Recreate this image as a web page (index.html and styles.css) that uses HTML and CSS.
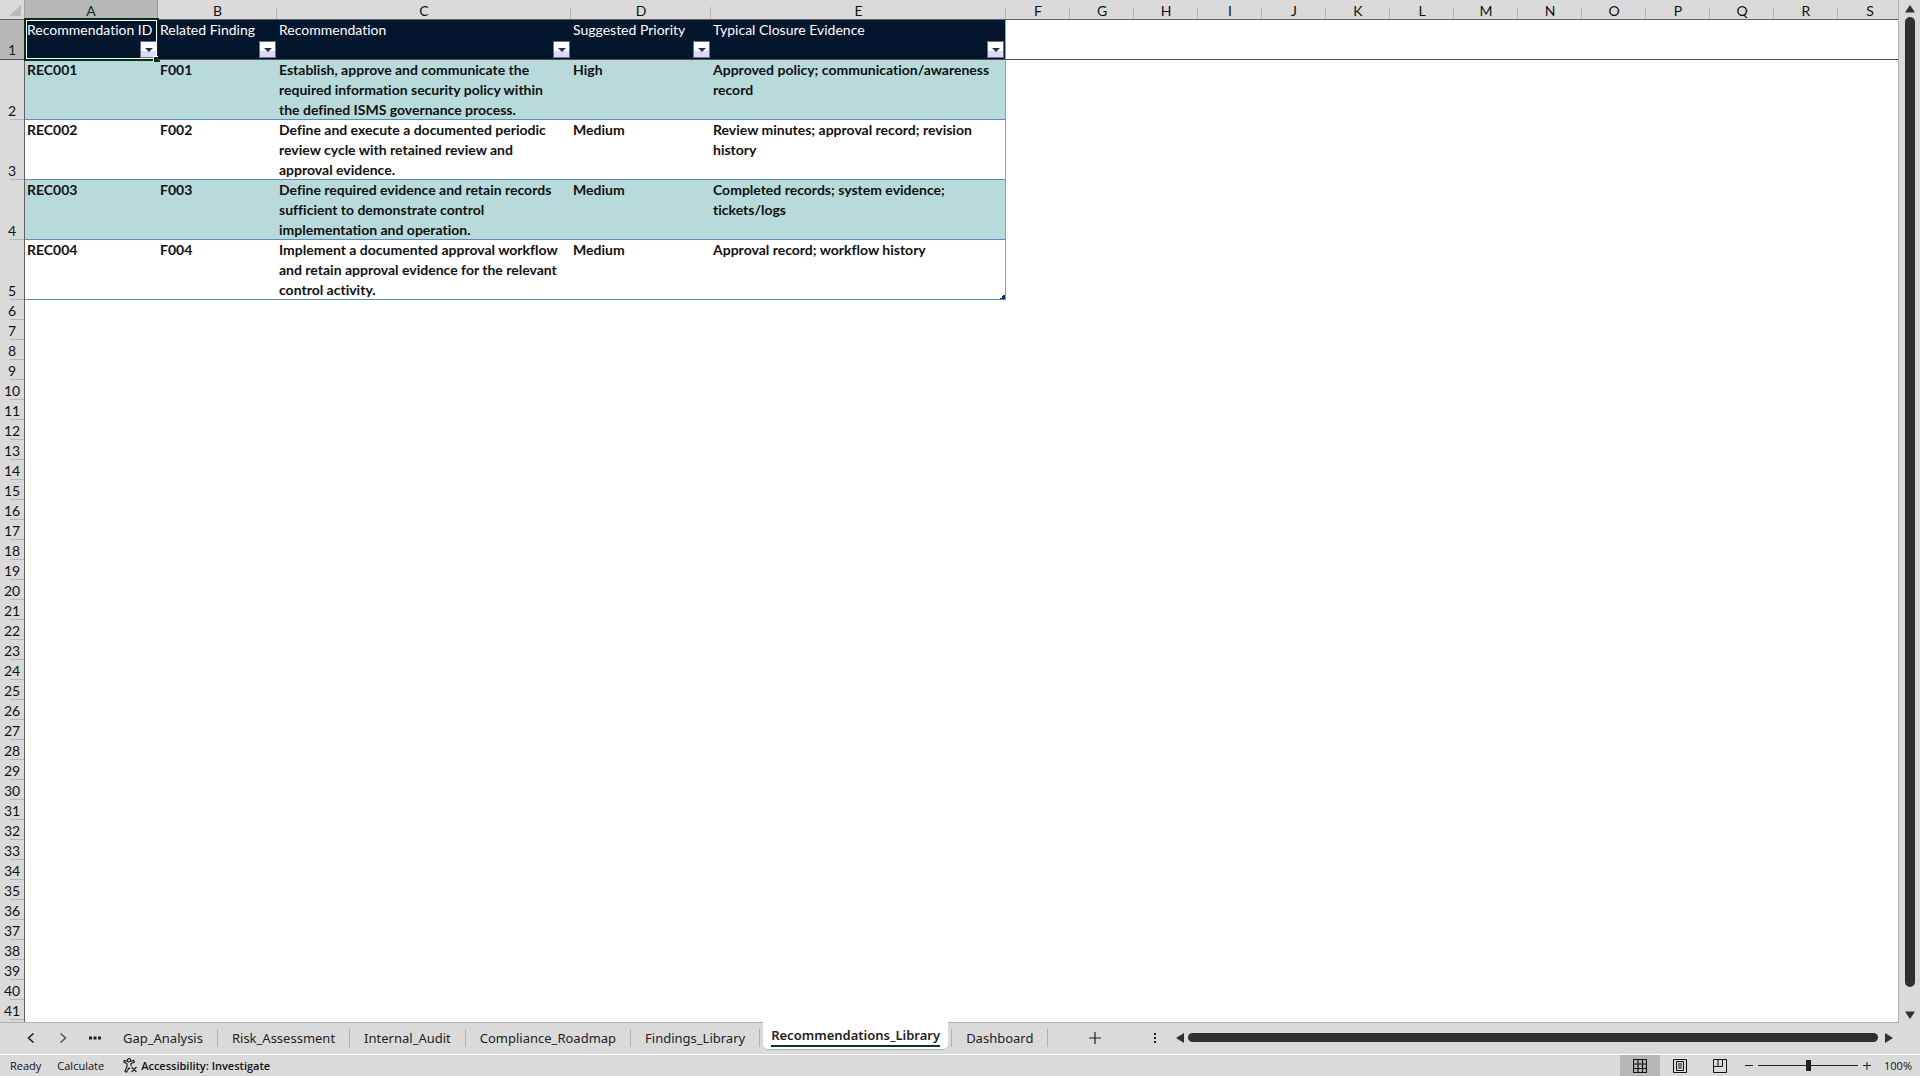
FILE: index.html
```html
<!DOCTYPE html>
<html lang="en">
<head>
<meta charset="utf-8">
<title>Recommendations_Library</title>
<link rel="stylesheet" href="styles.css">
</head>
<body>
<main class="workspace">
  <div class="sheet">
    <table class="grid">
      <colgroup>
        <col class="w-rowhead"><col class="w-a"><col class="w-b"><col class="w-c"><col class="w-d"><col class="w-e">
        <col class="w-std" span="14">
      </colgroup>
      <thead>
        <tr class="letters">
          <td class="corner"><svg width="12" height="11" viewBox="0 0 12 11"><path d="M12 0v11H0z" fill="#b9b9b9"/></svg></td>
          <th class="on">A</th><th>B</th><th>C</th><th>D</th><th>E</th><th>F</th><th>G</th><th>H</th><th>I</th><th>J</th><th>K</th><th>L</th><th>M</th><th>N</th><th>O</th><th>P</th><th>Q</th><th>R</th><th>S</th>
        </tr>
      </thead>
      <tbody id="rows">
        <tr class="titles">
          <th class="num on">1</th>
          <td class="title selected"><div class="field"><span>Recommendation ID</span><button class="filter" aria-label="Filter Recommendation ID"></button></div></td>
          <td class="title"><div class="field"><span>Related Finding</span><button class="filter" aria-label="Filter Related Finding"></button></div></td>
          <td class="title"><div class="field"><span>Recommendation</span><button class="filter" aria-label="Filter Recommendation"></button></div></td>
          <td class="title"><div class="field"><span>Suggested Priority</span><button class="filter" aria-label="Filter Suggested Priority"></button></div></td>
          <td class="title edge"><div class="field"><span>Typical Closure Evidence</span><button class="filter" aria-label="Filter Typical Closure Evidence"></button></div></td>
          <td colspan="14" class="rest"></td>
        </tr>
        <tr class="record band">
          <th class="num">2</th>
          <td>REC001</td><td>F001</td>
          <td>Establish, approve and communicate the required information security policy within the defined ISMS governance process.</td>
          <td>High</td>
          <td class="edge">Approved policy; communication/awareness record</td>
        </tr>
        <tr class="record">
          <th class="num">3</th>
          <td>REC002</td><td>F002</td>
          <td>Define and execute a documented periodic review cycle with retained review and approval evidence.</td>
          <td>Medium</td>
          <td class="edge">Review minutes; approval record; revision history</td>
        </tr>
        <tr class="record band">
          <th class="num">4</th>
          <td>REC003</td><td>F003</td>
          <td>Define required evidence and retain records sufficient to demonstrate control implementation and operation.</td>
          <td>Medium</td>
          <td class="edge">Completed records; system evidence; tickets/logs</td>
        </tr>
        <tr class="record">
          <th class="num">5</th>
          <td>REC004</td><td>F004</td>
          <td>Implement a documented approval workflow and retain approval evidence for the relevant control activity.</td>
          <td>Medium</td>
          <td class="edge last">Approval record; workflow history</td>
        </tr>
      </tbody>
    </table>
  </div>
  <div class="vscroll">
    <svg width="10" height="8" viewBox="0 0 10 8"><path d="M5 0l5 7.500H0z" fill="#303030"/></svg>
    <div class="vthumb"></div>
    <svg width="10" height="8" viewBox="0 0 10 8"><path d="M0 .5h10L5 8z" fill="#303030"/></svg>
  </div>
</main>
<nav class="tabs">
  <div class="steps">
    <button aria-label="Previous sheet"><svg width="8" height="10" viewBox="0 0 8 10"><path d="M6.500 .5L1.500 5l5 4.500" fill="none" stroke="#222" stroke-width="1.600"/></svg></button>
    <button aria-label="Next sheet"><svg width="8" height="10" viewBox="0 0 8 10"><path d="M1.500 .5l5 4.500-5 4.500" fill="none" stroke="#555" stroke-width="1.500"/></svg></button>
    <button aria-label="More sheets"><svg width="12" height="4" viewBox="0 0 12 4"><path d="M0 .5h3v3H0zM4.500 .5h3v3h-3zM9 .5h3v3H9z" fill="#222"/></svg></button>
  </div>
  <a class="tab" href="#gap">Gap_Analysis</a>
  <a class="tab" href="#risk">Risk_Assessment</a>
  <a class="tab" href="#audit">Internal_Audit</a>
  <a class="tab" href="#roadmap">Compliance_Roadmap</a>
  <a class="tab" href="#findings">Findings_Library</a>
  <a class="tab active" href="#recommendations"><span>Recommendations_Library</span></a>
  <a class="tab after" href="#dashboard">Dashboard</a>
  <button class="add" aria-label="New sheet"><svg width="12" height="12" viewBox="0 0 12 12"><path d="M6 0v12M0 6h12" stroke="#222" stroke-width="1.200"/></svg></button>
  <div class="hscroll">
    <svg class="grip" width="2" height="12" viewBox="0 0 2 12"><path d="M0 1h2v2H0zM0 5h2v2H0zM0 9h2v2H0z" fill="#222"/></svg>
    <svg width="8" height="10" viewBox="0 0 8 10"><path d="M8 0v10L0 5z" fill="#303030"/></svg>
    <div class="hthumb"></div>
    <svg width="8" height="10" viewBox="0 0 8 10"><path d="M0 0v10l8-5z" fill="#303030"/></svg>
  </div>
</nav>
<footer class="status">
  <span>Ready</span>
  <span>Calculate</span>
  <button class="access"><svg width="15" height="15" viewBox="0 0 15 15" fill="none" stroke="#222" stroke-width="1.200" stroke-linejoin="round"><circle cx="6" cy="2.300" r="1.700"/><path d="M4.300 3.500L1.500 2.400.7 3.900 4 5.800V8.500L2 13.300l1.500.9L6 9.800l1 1.200M7.700 3.500l2.900-1.100.8 1.500L8 5.800V8M8.500 9l5 5M13.500 9l-5 5"/></svg>Accessibility: Investigate</button>
  <div class="views">
    <button class="view on" aria-label="Normal"><svg width="14" height="14" viewBox="0 0 14 14" fill="none" stroke="#111"><path d="M.5 .5h13v13H.5zM5 .5v13M9.500 .5v13M.5 5h13M.5 9.500h13" stroke-width="1.200"/></svg></button>
    <button class="view" aria-label="Page layout"><svg width="14" height="14" viewBox="0 0 14 14" fill="none" stroke="#111"><path d="M.5 .5h13v13H.5zM3.500 2.500h7v9h-7zM5 5h4M5 7h4M5 9h4"/></svg></button>
    <button class="view" aria-label="Page break preview"><svg width="14" height="14" viewBox="0 0 14 14" fill="none" stroke="#111"><path d="M.5 .5h13v13H.5zM5 .5v7M.5 7.500h9M9.500 .5v7"/></svg></button>
  </div>
  <button class="zoom-step" aria-label="Zoom out"><svg width="8" height="8" viewBox="0 0 8 8"><path d="M0 3.500h8" stroke="#222"/></svg></button>
  <input class="zoom" type="range" min="0" max="100" value="50" aria-label="Zoom">
  <button class="zoom-step" aria-label="Zoom in"><svg width="8" height="8" viewBox="0 0 8 8"><path d="M0 3.500h8M4 0v8" stroke="#222"/></svg></button>
  <span class="percent">100%</span>
</footer>
<script src="rows.js"></script>
</body>
</html>
```
FILE: styles.css
```css
* { box-sizing: border-box; }
body {
  margin: 0;
  height: 100vh;
  display: flex;
  flex-direction: column;
  overflow: hidden;
  background: #dadada;
  color: #111;
  font: 14px/20px Lato, sans-serif;
  font-variant-ligatures: none;
}
button { border: 0; padding: 0; background: none; font: inherit; color: inherit; display: flex; align-items: center; justify-content: center; }
svg { display: block; flex: none; }

.workspace { flex: 1; min-height: 0; display: flex; }
.sheet {
  flex: 1;
  min-width: 0;
  overflow: hidden;
  background: #fff;
  border-right: 1px solid #b0b0b0;
  border-bottom: 1px solid #b0b0b0;
}
.grid { table-layout: fixed; border-collapse: separate; border-spacing: 0; width: 1902px; }
.w-rowhead { width: 25px; }
.w-a { width: 133px; }
.w-b { width: 119px; }
.w-c { width: 294px; }
.w-d { width: 140px; }
.w-e { width: 295px; }
.w-std { width: 64px; }
.grid td, .grid th { padding: 0; vertical-align: top; text-align: left; }

.letters { height: 20px; }
.grid .letters th, .grid .corner { border-bottom: 1px solid #606060; }
.grid .letters th {
  text-align: center;
  font-weight: 400;
  padding-top: 2px;
  line-height: 17px;
  background: linear-gradient(#b5b5b5, #b5b5b5) right bottom / 1px 12px no-repeat #dadada;
}
.grid .letters .on, .grid .num.on { background: #b7b7b7; color: #0b2d17; }
.grid .letters .on { border-right: 1px solid #999; }
.grid .corner { padding: 5px 0 0 9px; background: #dadada; border-right: 1px solid #a0a0a0; }
.corner svg { height: 11px; margin-bottom: 3px; }

.grid .num {
  height: 20px;
  vertical-align: bottom;
  text-align: center;
  font-weight: 400;
  line-height: 18px;
  border-right: 1px solid #606060;
  background: linear-gradient(#b5b5b5, #b5b5b5) right bottom / 14px 1px no-repeat #dadada;
}
.titles { height: 40px; }
.grid .titles > * { border-bottom: 1px solid #505050; }
.grid .title { background: #04162e; color: #fff; position: relative; }
.field { height: 39px; display: flex; flex-direction: column; justify-content: space-between; padding: 0 1px 1px 2px; }
.filter {
  align-self: flex-end;
  width: 17px;
  height: 17px;
  border: 1px solid #70707c;
  background: linear-gradient(#fff 60%, #dadaff 60%);
}
.filter::after { content: ""; border: 4px solid transparent; border-top-color: #303030; border-bottom: 0; }
.selected::before {
  content: "";
  position: absolute;
  inset: -2px -1px -2px -1px;
  border: 2px solid #0a2d17;
  box-shadow: inset 0 0 0 1px #fff;
  pointer-events: none;
}
.selected::after {
  content: "";
  position: absolute;
  right: -2px;
  bottom: -3px;
  width: 6px;
  height: 5px;
  background: #0a2d17;
  border: solid #fff;
  border-width: 1px 0 0 1px;
}
.record { height: 60px; font-weight: 700; }
.grid .record td { padding: 0 8px 0 2px; box-shadow: inset 0 -1px #5b8bbd; }
.band td { background: #b8dada; }
.grid .edge { border-right: 1px solid #7ba3d6; }
.grid .last { background: linear-gradient(135deg, transparent 50%, #0c2a66 50%) right bottom / 6px 6px no-repeat; }

.vscroll { width: 21px; display: flex; flex-direction: column; align-items: center; gap: 4px; padding: 5px 0 4px; }
.vthumb { flex: 1; width: 10px; margin-bottom: 20px; border-radius: 5px; background: #303030; }

.tabs { height: 31px; display: flex; align-items: center; padding-bottom: 2px; font: 13px/20px "Noto Sans", sans-serif; }
.steps { display: flex; gap: 20px; padding: 0 8px 0 25px; }
.steps button { width: 12px; height: 20px; }
.tab { color: #222; text-decoration: none; padding: 0 14px; height: 18px; line-height: 18px; border-right: 1px solid #b0b0b0; }
.tab.active {
  align-self: flex-start;
  height: 28px;
  margin: -1px 3px 0;
  padding: 4px 8px 0;
  background: #fff;
  border: 0;
  border-bottom: 1px solid #b0b0b0;
  border-radius: 0 0 5px 5px;
  font-weight: 600;
}
.tab.active span { display: block; height: 21px; border-bottom: 2px solid #0a3a1c; }
.tab.after { border-left: 1px solid #b0b0b0; }
.add { width: 94px; height: 20px; }
.hscroll { flex: 1; display: flex; align-items: center; gap: 4px; padding: 0 27px 0 12px; }
.hscroll svg:last-child { margin-left: 3px; }
.grip { margin-right: 16px; }
.hthumb { flex: 1; height: 9px; border-radius: 5px; background: #303030; }

.status { height: 22px; display: flex; align-items: center; border-top: 1px solid #fff; padding: 0 8px 0 10px; font: 11px/20px "Open Sans", sans-serif; }
.status > span { margin-right: 16px; }
.access { font-weight: 600; gap: 3px; margin-left: 3px; }
.views { display: flex; align-self: stretch; margin-left: auto; margin-right: 4px; }
.view { width: 40px; }
.view.on { background: #b7b7b7; }
.zoom-step { width: 10px; height: 20px; }
.zoom { appearance: none; width: 100px; height: 20px; margin: 0 4px; background: linear-gradient(#222, #222) center / 100% 1px no-repeat; }
.zoom::-webkit-slider-thumb { appearance: none; width: 5px; height: 11px; background: #222; }
.status .percent { margin: 0 0 0 12px; }
```
FILE: rows.js
```
// Blank rows below the data
const rows = document.getElementById('rows');
for (let n = 6; n <= 42; n++) {
  const tr = document.createElement('tr');
  const th = document.createElement('th');
  th.className = 'num';
  if (n < 42) th.textContent = n;
  const td = document.createElement('td');
  td.colSpan = 19;
  tr.append(th, td);
  rows.append(tr);
}
```
